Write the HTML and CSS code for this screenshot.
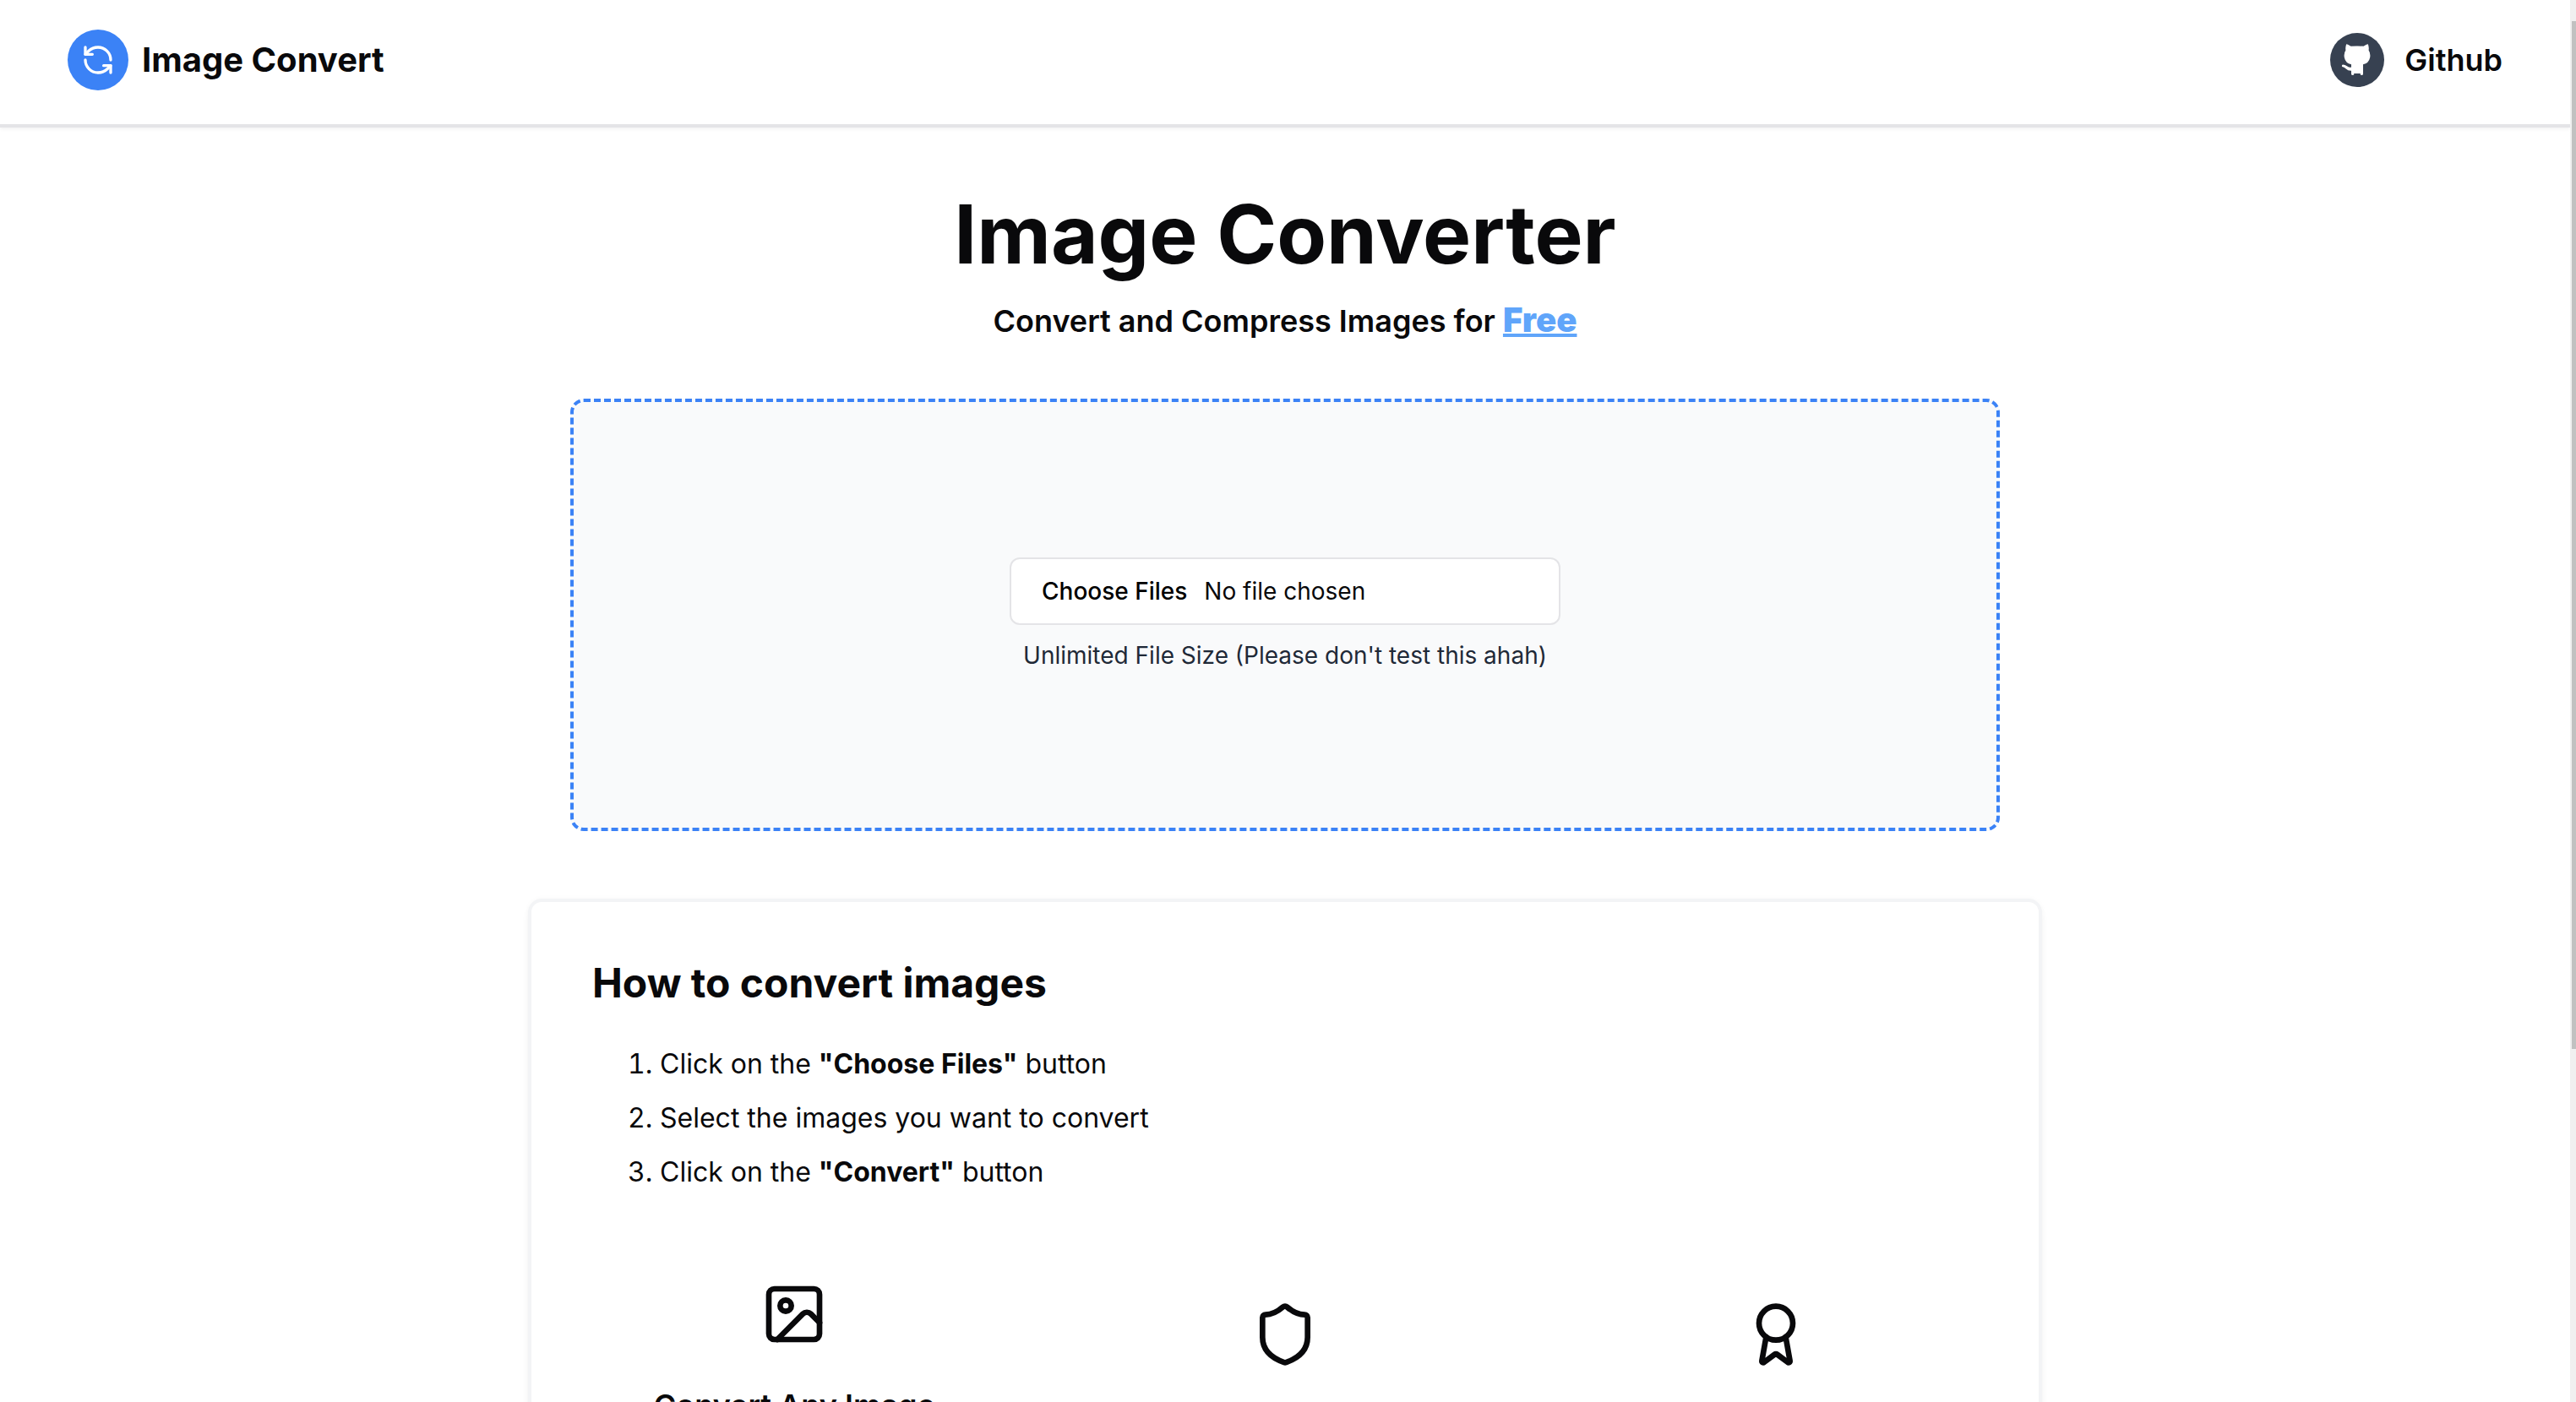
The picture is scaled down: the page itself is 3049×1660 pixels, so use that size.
FILE: index.html
```html
<!DOCTYPE html>
<html lang="en">
<head>
<meta charset="utf-8">
<meta name="viewport" content="width=device-width, initial-scale=1">
<title>Image Convert</title>
<link rel="stylesheet" href="styles.css">
</head>
<body>
<header class="header">
  <a class="brand" href="#">
    <span class="brand-mark">
      <svg class="brand-icon" viewBox="0 0 24 24" aria-hidden="true"><path d="M21 12a9 9 0 0 0-9-9 9.75 9.75 0 0 0-6.74 2.74L3 8"/><path d="M3 3v5h5"/><path d="M3 12a9 9 0 0 0 9 9 9.75 9.75 0 0 0 6.74-2.74L21 16"/><path d="M16 16h5v5"/></svg>
    </span>
    Image Convert
  </a>
  <a class="github" href="#">
    <svg class="github-icon" viewBox="0 0 64 64" aria-hidden="true"><circle cx="32" cy="32" r="32" fill="#374151"/><path fill="#fff" d="M19.300 13.300Q20.500 13 24.500 15.800Q32 15 39.500 15.800Q43.500 13 44.700 13.300Q46.200 16 45.600 20.500Q48 24 47.200 29Q45.800 36 39 37.300V49.200Q37.500 50.500 35.800 49.500V48H28.200V49.500Q26.500 50.500 25 49.200V44.700Q21 44.800 18.800 42.500Q16.500 40 14.200 40Q13.300 38.200 15 37.600Q17.500 37.600 20.300 39.600Q22.500 41.200 25 40.700V37.300Q18.200 36 16.800 29Q16 24 18.400 20.500Q17.800 16 19.300 13.300z"/></svg>
    Github
  </a>
</header>

<main class="main">
  <section class="hero">
    <h1 class="title">Image Converter</h1>
    <p class="subtitle">Convert and Compress Images for <span class="free">Free</span></p>
  </section>

  <section class="dropzone">
    <input class="file-input" id="files" type="file" accept="image/*" multiple>
    <label class="file-note" for="files">Unlimited File Size (Please don't test this ahah)</label>
  </section>

  <section class="card">
    <h2 class="card-title">How to convert images</h2>
    <ol class="steps">
      <li>Click on the <strong>"Choose Files"</strong> button</li>
      <li>Select the images you want to convert</li>
      <li>Click on the <strong>"Convert"</strong> button</li>
    </ol>
    <div class="features">
      <div class="feature feature-tall">
        <svg class="feature-icon" viewBox="0 0 24 24" aria-hidden="true"><rect width="18" height="18" x="3" y="3" rx="2"/><circle cx="9" cy="9" r="2"/><path d="m21 15-3.086-3.086a2 2 0 0 0-2.828 0L6 21"/></svg>
        <h3 class="feature-title">Convert Any Image</h3>
      </div>
      <div class="feature">
        <svg class="feature-icon" viewBox="0 0 24 24" aria-hidden="true"><path d="M20 13c0 5-3.500 7.500-7.660 8.950a1 1 0 0 1-.67-.01C7.500 20.500 4 18 4 13V6a1 1 0 0 1 1-1c2 0 4.500-1.200 6.240-2.720a1.170 1.170 0 0 1 1.520 0C14.510 3.810 17 5 19 5a1 1 0 0 1 1 1z"/></svg>
      </div>
      <div class="feature">
        <svg class="feature-icon" viewBox="0 0 24 24" aria-hidden="true"><path d="m15.477 12.890 1.515 8.526a.5.5 0 0 1-.81.470l-3.580-2.687a1 1 0 0 0-1.197 0l-3.586 2.686a.5.5 0 0 1-.810-.469l1.514-8.526"/><circle cx="12" cy="8" r="6"/></svg>
      </div>
    </div>
  </section>
</main>
<div class="scroll-track" aria-hidden="true"><div class="scroll-thumb"></div></div>
</body>
</html>
```
FILE: styles.css
```css
* { box-sizing: border-box; }

body {
  height: 100vh;
  margin: 0;
  padding-right: 7px;
  overflow: hidden;
  background: #fff;
  color: #09090b;
  font-family: Inter, "Liberation Sans", sans-serif;
  font-size: 32px;
  line-height: 48px;
}

h1, h2, h3, p, ol { margin: 0; }
a { color: inherit; text-decoration: none; }

.header {
  display: flex;
  align-items: center;
  justify-content: space-between;
  padding: 35px 80px 40px;
  border-bottom: 4px solid #e4e4e7;
  box-shadow: 0 2px 4px rgba(0, 0, 0, 0.05);
}

.brand {
  display: flex;
  align-items: center;
  gap: 16px;
  font-size: 40px;
  font-weight: 700;
}

.brand-mark {
  display: grid;
  place-items: center;
  width: 72px;
  height: 72px;
  border-radius: 50%;
  background: #3b82f6;
}

.brand-icon, .feature-icon {
  fill: none;
  stroke: currentColor;
  stroke-width: 2;
  stroke-linecap: round;
  stroke-linejoin: round;
}

.brand-icon {
  width: 40px;
  height: 40px;
  color: #fff;
}

.github {
  display: flex;
  align-items: center;
  gap: 24px;
  font-size: 36px;
  font-weight: 600;
}

.github-icon {
  width: 64px;
  height: 64px;
}

.main {
  display: flex;
  flex-direction: column;
  align-items: center;
  padding-top: 78px;
}

.hero { text-align: center; }

.title {
  font-size: 96px;
  font-weight: 700;
  line-height: 96px;
}

.subtitle {
  padding: 26px 0 64px;
  font-size: 36px;
  font-weight: 600;
  line-height: 56px;
}

.free {
  color: #60a5fa;
  font-size: 40px;
  font-weight: 900;
  text-decoration: underline;
}

.dropzone {
  display: flex;
  flex-direction: column;
  align-items: center;
  justify-content: center;
  gap: 16px;
  width: 100%;
  max-width: 1692px;
  min-height: 512px;
  border: 4px dashed #3b82f6;
  border-radius: 16px;
  background: #f9fafb;
}

.file-input {
  width: 652px;
  height: 80px;
  padding: 16px 24px;
  border: 2px solid #e4e4e7;
  border-radius: 12px;
  background: #fff;
  color: #09090b;
  font: 400 28px/44px Inter, "Liberation Sans", sans-serif;
}

.file-input::file-selector-button {
  margin: 0 8px 0 0;
  padding: 0 12px;
  border: 0;
  background: transparent;
  color: #000;
  font: 500 28px/44px Inter, "Liberation Sans", sans-serif;
}

.file-note {
  color: #1f2937;
  font-size: 28px;
  line-height: 40px;
}

.card {
  width: 100%;
  max-width: 1792px;
  margin-top: 80px;
  padding: 64px 72px;
  border: 4px solid #f3f4f6;
  border-radius: 16px;
  box-shadow: 0 8px 12px -2px rgba(0, 0, 0, 0.05), 0 0 6px rgba(0, 0, 0, 0.03);
}

.card-title {
  font-size: 48px;
  font-weight: 700;
  line-height: 64px;
}

.steps {
  display: grid;
  gap: 16px;
  padding: 40px 0 0 80px;
}

.features {
  display: grid;
  grid-template-columns: repeat(3, 1fr);
  gap: 102px;
  padding-top: 104px;
}

.feature {
  display: flex;
  flex-direction: column;
  align-items: center;
  gap: 40px;
  padding-top: 24px;
}

.feature-tall { padding-top: 0; }

.feature-icon {
  width: 80px;
  height: 80px;
}

.feature-title {
  font-size: 36px;
  font-weight: 600;
  line-height: 56px;
}

.scroll-track {
  position: fixed;
  top: 0;
  right: 0;
  bottom: 0;
  width: 7px;
  padding: 25px 0 0 2px;
  background: #f0f0f0;
}

.scroll-thumb {
  height: 1217px;
  background: #c1c1c1;
}
```
